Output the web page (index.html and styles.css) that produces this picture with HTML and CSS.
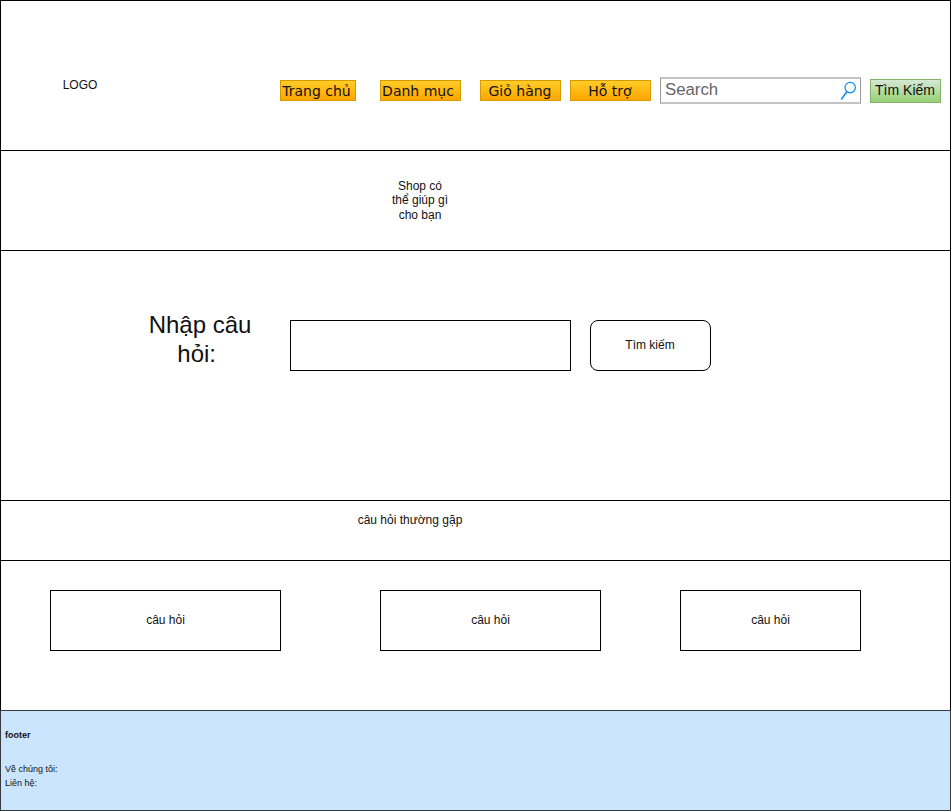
FILE: index.html
```html
<!DOCTYPE html>
<html lang="vi">
<head>
<meta charset="utf-8">
<title>Hỗ trợ</title>
<link rel="stylesheet" href="styles.css">
</head>
<body>
<div class="page">
  <header class="header">
    <div class="logo">LOGO</div>
    <nav class="nav">
      <a class="nav-item nav-home">Trang chủ</a>
      <a class="nav-item nav-category">Danh mục</a>
      <a class="nav-item nav-cart">Giỏ hàng</a>
      <a class="nav-item nav-help">Hỗ trợ</a>
    </nav>
    <div class="search">
      <span>Search</span>
      <svg class="search-icon" width="17" height="20" viewBox="0 0 17 20" fill="none" stroke="#0c8cf5" stroke-width="1.2"><circle cx="10.2" cy="6.6" r="5.2"/><path d="M6.8 10.8L1.2 18.5" stroke-width="1.5"/></svg>
    </div>
    <button class="search-button">Tìm Kiếm</button>
  </header>
  <section class="intro"><p>Shop có<br>thể giúp gì<br>cho bạn</p></section>
  <section class="ask">
    <label class="ask-label" for="question">Nhập câu hỏi:&nbsp;</label>
    <input class="ask-input" id="question">
    <button class="ask-button">Tìm kiếm</button>
  </section>
  <section class="faq-title"><p>câu hỏi thường gặp</p></section>
  <section class="faq">
    <div class="card card-first">câu hỏi</div>
    <div class="card card-second">câu hỏi</div>
    <div class="card card-third">câu hỏi</div>
  </section>
  <footer class="footer">
    <h2>footer</h2>
    <p>Về chúng tôi:</p>
    <p>Liên hệ:</p>
  </footer>
</div>
</body>
</html>
```
FILE: styles.css
```css
* { box-sizing: border-box; }
body { margin: 0; background: #fff; color: #111; font: 12px/14.4px "Liberation Sans", Arial, sans-serif; }
p, h2 { margin: 0; }
button, input { font-family: inherit; color: inherit; padding: 0; }
.page { width: 951px; height: 811px; }
.header, .intro, .ask, .faq-title, .faq { display: flex; align-items: flex-start; border: 1px solid #000; border-bottom: 0; }
.header { height: 150px; }
.logo { width: 120px; margin: 77px 0 0 19px; text-align: center; }
.nav { display: flex; margin: 79px 0 0 140px; }
.nav-item { width: 81px; height: 21px; padding-right: 1px; border: 1px solid #d79b00; background: linear-gradient(#ffcd28, #ffa500); font: 14px/20px "DejaVu Sans", Verdana, sans-serif; text-align: center; white-space: nowrap; }
.nav-home { width: 76px; margin-right: 24px; padding-right: 3px; }
.nav-category { margin-right: 19px; padding-right: 5px; }
.nav-cart { margin-right: 9px; }
.search { display: flex; justify-content: space-between; width: 201px; height: 27px; margin: 76px 0 0 9px; padding: 0 3px 0 4px; border: solid #999; border-width: 2px 1px; border-top-color: #c4c4c4; border-bottom-color: #c4c4c4; color: #666; font-size: 16.8px; line-height: 21px; }
.search-icon { margin-top: 2px; }
.search-button { width: 71px; height: 24px; margin: 78px 0 0 9px; border: 1px solid #82b366; background: linear-gradient(#d5e8d4, #97d077); font-size: 14px; line-height: 20px; padding: 0 1px 2px 0; white-space: nowrap; }
.intro { height: 100px; justify-content: center; padding: 28px 111px 0 0; text-align: center; }
.ask { height: 250px; }
.ask-label { width: 120px; margin: 60px 0 0 139px; font-size: 24px; line-height: 28.8px; text-align: center; }
.ask-input { width: 281px; height: 51px; margin: 69px 0 0 30px; border: 1px solid #000; background: #fff; }
.ask-button { width: 121px; height: 51px; margin: 69px 0 0 19px; padding: 0 1px 2px 0; border: 1px solid #000; border-radius: 8px; background: #fff; font-size: 12px; }
.faq-title { height: 60px; justify-content: center; padding: 12px 131px 0 0; }
.faq { height: 150px; }
.card { display: flex; align-items: center; justify-content: center; height: 61px; margin-top: 29px; border: 1px solid #000; }
.card-first { width: 231px; margin-left: 49px; }
.card-second { width: 221px; margin-left: 99px; }
.card-third { width: 181px; margin-left: 79px; }
.footer { height: 101px; padding: 17px 4px; border: 1px solid #36393d; background: #cce5ff; font-size: 9px; line-height: 14px; }
.footer h2 { margin-bottom: 20px; font-size: 9px; line-height: 14px; }
```
